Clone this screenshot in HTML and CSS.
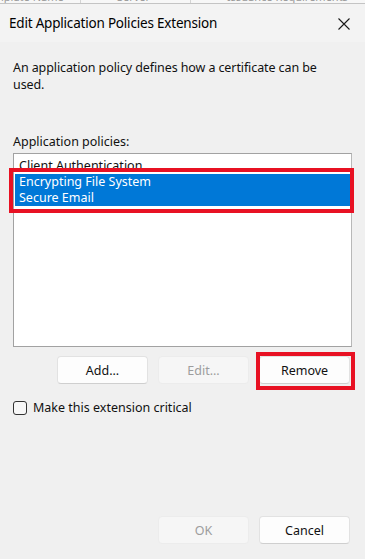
FILE: index.html
```html
<!DOCTYPE html>
<html lang="en">
<head>
    <meta charset="UTF-8">
    <meta name="viewport" content="width=device-width, initial-scale=1.0">
    <title>Edit Application Policies Extension</title>
    <link rel="stylesheet" href="styles.css">
</head>
<body>
    <div class="behind">
        <span class="col col-name">Template Name</span>
        <span class="col col-server">Server</span>
        <span class="col col-req">Issuance Requirements</span>
    </div>
    <div class="titlebar">
        <span>Edit Application Policies Extension</span>
        <svg class="close" width="12" height="12" viewBox="0 0 12 12">
            <path d="M0.5 0.5 L11.5 11.5 M11.5 0.5 L0.5 11.5" stroke="#1a1a1a" stroke-width="1.1" fill="none"/>
        </svg>
    </div>
    <div class="dialog">
        <p class="desc">An application policy defines how a certificate can be used.</p>
        <p class="label">Application policies:</p>
        <div class="list-wrap">
            <ul class="list">
                <li>Client Authentication</li>
                <li class="selected">Encrypting File System</li>
                <li class="selected">Secure Email</li>
            </ul>
            <div class="mark mark-list"></div>
        </div>
        <div class="buttons">
            <button class="btn">Add...</button>
            <button class="btn" disabled>Edit...</button>
            <div class="btn-wrap">
                <button class="btn">Remove</button>
                <div class="mark mark-remove"></div>
            </div>
        </div>
        <label class="check">
            <span class="box"></span>
            Make this extension critical
        </label>
        <div class="footer">
            <button class="btn" disabled>OK</button>
            <button class="btn">Cancel</button>
        </div>
    </div>
</body>
</html>
```

FILE: styles.css
```css
html, body {
    height: 100%;
}
body {
    margin: 0;
    background-color: #f0f0f0;
    font-family: "Noto Sans", "Open Sans", sans-serif;
    font-size: 12px;
    color: #111;
    display: flex;
    flex-direction: column;
}
.behind {
    height: 3px;
    border-bottom: 1px solid #c4c4c4;
    overflow: hidden;
    display: flex;
    background-color: #f7f7f7;
    font-size: 11px;
    color: #999;
}
.col {
    margin-top: -10px;
    line-height: 14px;
    white-space: nowrap;
}
.col-name {
    width: 98px;
    margin-left: -18px;
    border-right: 1px solid #d4d4d4;
}
.col-server {
    width: 110px;
    padding-left: 36px;
    box-sizing: border-box;
    border-right: 1px solid #d4d4d4;
}
.col-req {
    padding-left: 36px;
}
.titlebar {
    height: 38px;
    background-color: #f3f3f3;
    display: flex;
    align-items: center;
    justify-content: space-between;
    padding: 0 15px 0 9px;
    font-size: 13.5px;
    letter-spacing: -0.2px;
    color: #000;
}
.close {
    margin-top: 1px;
}
.dialog {
    flex: 1;
    display: flex;
    flex-direction: column;
    padding: 0 15px 15px 13px;
}
.desc {
    margin: 17px 0 0;
    line-height: 17px;
    font-size: 12.5px;
    letter-spacing: -0.1px;
}
.label {
    margin: 40px 0 0;
    line-height: 17px;
    font-size: 12.5px;
}
.list-wrap {
    position: relative;
    margin-top: 3px;
    width: 339px;
}
.list {
    list-style: none;
    margin: 0;
    padding: 4px 0;
    height: 194px;
    box-sizing: border-box;
    background-color: white;
    border: 1px solid #a2a2a2;
    border-right-color: #b8b8b8;
}
.list li {
    height: 16px;
    line-height: 16px;
    padding-left: 4px;
    margin: 0 1px;
    font-size: 12.5px;
}
.list li.selected {
    background-color: #0078d7;
    color: white;
}
.mark {
    position: absolute;
    border: 4px solid #e81123;
    box-sizing: border-box;
}
.mark-list {
    top: 15px;
    left: -4px;
    width: 345px;
    height: 45px;
}
.buttons {
    display: flex;
    justify-content: flex-end;
    gap: 10px;
    margin-top: 9px;
}
.btn {
    width: 91px;
    height: 28px;
    background-color: #fdfdfd;
    border: 1px solid #e2e2e2;
    border-bottom-color: #cfcfcf;
    border-radius: 4px;
    font-family: inherit;
    font-size: 12.5px;
    color: #111;
    padding: 0;
}
.btn:disabled {
    background-color: #f6f6f6;
    border-color: #ececec;
    color: #9d9d9d;
}
.btn-wrap {
    position: relative;
    display: flex;
}
.mark-remove {
    top: -4px;
    left: -3px;
    width: 99px;
    height: 38px;
}
.check {
    display: flex;
    align-items: center;
    gap: 6px;
    margin-top: 15px;
    font-size: 12.5px;
}
.box {
    width: 12px;
    height: 12px;
    border: 1px solid #333;
    border-radius: 3px;
    background-color: #f7f7f7;
}
.footer {
    margin-top: auto;
    display: flex;
    justify-content: flex-end;
    gap: 10px;
}
```
